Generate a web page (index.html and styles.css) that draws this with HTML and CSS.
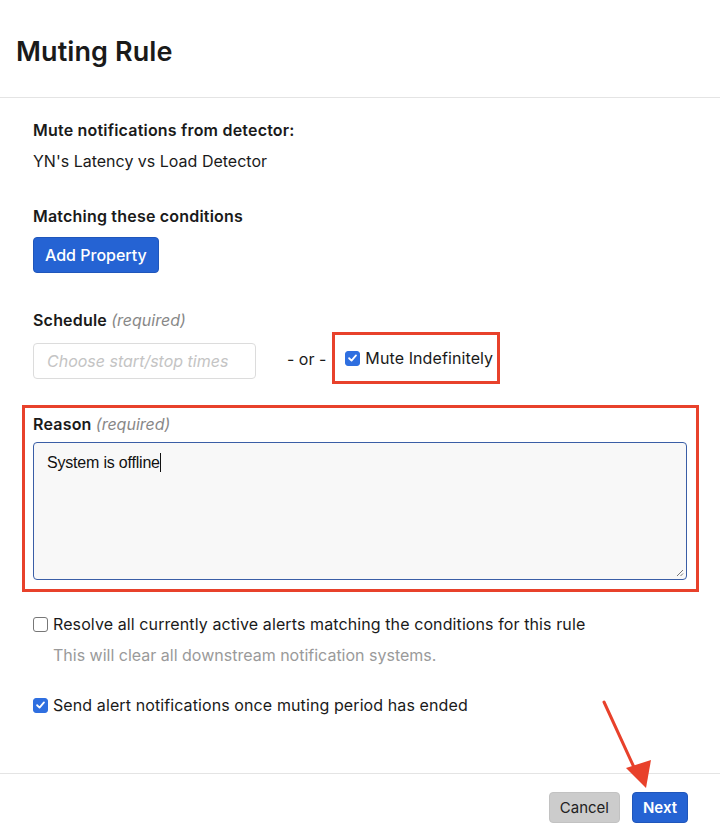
FILE: index.html
```html
<!DOCTYPE html>
<html>
<head>
<meta charset="utf-8">
<link rel="stylesheet" href="styles.css">
</head>
<body>
<div class="modal">
  <header class="head"><h1 class="title">Muting Rule</h1></header>
  <main class="body">
    <section class="sec">
      <div class="label">Mute notifications from detector:</div>
      <div class="value">YN's Latency vs Load Detector</div>
    </section>
    <section class="sec sec-cond">
      <div class="label">Matching these conditions</div>
      <button class="btn btn-primary btn-add">Add Property</button>
    </section>
    <section class="sec sec-sched">
      <div class="label">Schedule <span class="req">(required)</span></div>
      <div class="sched-row">
        <div class="date-input">Choose start/stop times</div>
        <span class="or">- or -</span>
        <div class="hl hl-mute">
          <label class="check"><span class="cb cb-on"><svg viewBox="0 0 16 16" width="16" height="16"><path d="M3.8 8.3 L6.8 11.2 L12.3 4.8" fill="none" stroke="#fff" stroke-width="2.2" stroke-linecap="round" stroke-linejoin="round"/></svg></span>Mute Indefinitely</label>
        </div>
      </div>
    </section>
    <section class="hl hl-reason">
      <div class="label">Reason <span class="req">(required)</span></div>
      <div class="textarea">System is offline<span class="caret"></span>
        <svg class="grip" viewBox="0 0 8 8" width="8" height="8"><path d="M7 1 L1 7 M7 4.5 L4.5 7" stroke="#777" stroke-width="1"/></svg>
      </div>
    </section>
    <section class="opt opt-resolve">
      <label class="check"><span class="cb"></span>Resolve all currently active alerts matching the conditions for this rule</label>
      <div class="hint">This will clear all downstream notification systems.</div>
    </section>
    <section class="opt opt-send">
      <label class="check"><span class="cb cb-on"><svg viewBox="0 0 16 16" width="16" height="16"><path d="M3.8 8.3 L6.8 11.2 L12.3 4.8" fill="none" stroke="#fff" stroke-width="2.2" stroke-linecap="round" stroke-linejoin="round"/></svg></span>Send alert notifications once muting period has ended</label>
    </section>
  </main>
  <footer class="foot">
    <button class="btn btn-cancel">Cancel</button>
    <button class="btn btn-primary btn-next">Next</button>
  </footer>
  <svg class="arrow" width="80" height="110" viewBox="0 0 80 110">
    <line x1="6" y1="4" x2="40" y2="78" stroke="#e8412b" stroke-width="3" stroke-linecap="round"/>
    <polygon points="28,70 53,62 48,90" fill="#e8412b"/>
  </svg>
</div>
</body>
</html>
```
FILE: styles.css
```css
* { box-sizing: border-box; }
html, body { margin: 0; padding: 0; background: #fff; }
body {
  font-family: Inter, "Open Sans", sans-serif;
  color: #1a1a1a;
  font-size: 16px;
}
.modal { position: relative; width: 720px; height: 837px; display: flex; flex-direction: column; }
.head { height: 98px; border-bottom: 1px solid #e4e4e4; padding: 36px 16px 0; }
.title { margin: 0; font-size: 27px; font-weight: 600; line-height: 32px; letter-spacing: 0.1px; }
.body { flex: 1; padding: 20px 33px 0; }
.sec { margin: 0; }
.label { font-weight: 600; font-size: 16px; line-height: 24px; letter-spacing: 0.2px; }
.req { font-weight: 400; font-style: italic; color: #888; letter-spacing: 0; }
.value { margin-top: 7px; line-height: 24px; }
.sec-cond { margin-top: 31px; }
.btn {
  font-family: inherit; border: none; border-radius: 4px; cursor: pointer;
}
.btn-primary { background: #2563d3; color: #fff; border: 1px solid #1f56bb; }
.btn-add { margin-top: 9px; height: 36px; padding: 0 11px; font-size: 16px; font-weight: 500; }
.sec-sched { margin-top: 35px; }
.sched-row { display: flex; align-items: center; margin-top: 2px; }
.date-input {
  width: 223px; height: 36px; border: 1px solid #dcdcdc; border-radius: 4px;
  color: #c4c4c4; font-style: italic; padding: 0 13px; line-height: 34px; font-size: 16px;
  background: #fff; margin-top: 4px;
}
.or { margin-left: 31px; margin-right: 6px; }
.hl { border: 3px solid #e8412b; }
.hl-mute { width: 168px; height: 52px; display: flex; align-items: center; padding-left: 10px; margin-top: -2px; }
.check { display: flex; align-items: center; line-height: 24px; letter-spacing: 0.1px; }
.cb {
  width: 15px; height: 15px; border: 1px solid #777; border-radius: 3px; background: #fff;
  margin-right: 5px; display: flex; align-items: center; justify-content: center; flex: none;
}
.cb-on { background: #2f6fe0; border-color: #2f6fe0; }
.cb-on svg { width: 14px; height: 14px; }
.hl-reason { margin: 21px -12px 0 -11px; padding: 4px 9px 9px 8px; height: 187px; }
.textarea {
  position: relative; margin-top: 6px; height: 138px; border: 1px solid #3a5ea6; border-radius: 4px;
  background: #f8f8f8; padding: 9px 13px; font-family: "Liberation Sans", Arial, sans-serif;
  font-size: 16px; line-height: 22px; color: #111; letter-spacing: -0.2px;
}
.caret { display: inline-block; width: 1px; height: 19px; background: #111; vertical-align: -4px; }
.grip { position: absolute; right: 2px; bottom: 2px; }
.opt-resolve { margin-top: 20px; }
.hint { color: #9a9a9a; padding-left: 20px; margin-top: 7px; line-height: 24px; }
.opt-send { margin-top: 26px; }
.foot {
  height: 64px; border-top: 1px solid #e4e4e4; display: flex; justify-content: flex-end;
  align-items: flex-start; padding: 18px 32px 0 0; gap: 12px;
}
.btn-cancel { background: #cccccc; color: #222; height: 31px; padding: 0 10px; font-size: 15px; border: 1px solid #c2c2c2; }
.btn-next { height: 31px; padding: 0 10px; font-size: 15px; font-weight: 600; }
.arrow { position: absolute; left: 598px; top: 698px; }
```
